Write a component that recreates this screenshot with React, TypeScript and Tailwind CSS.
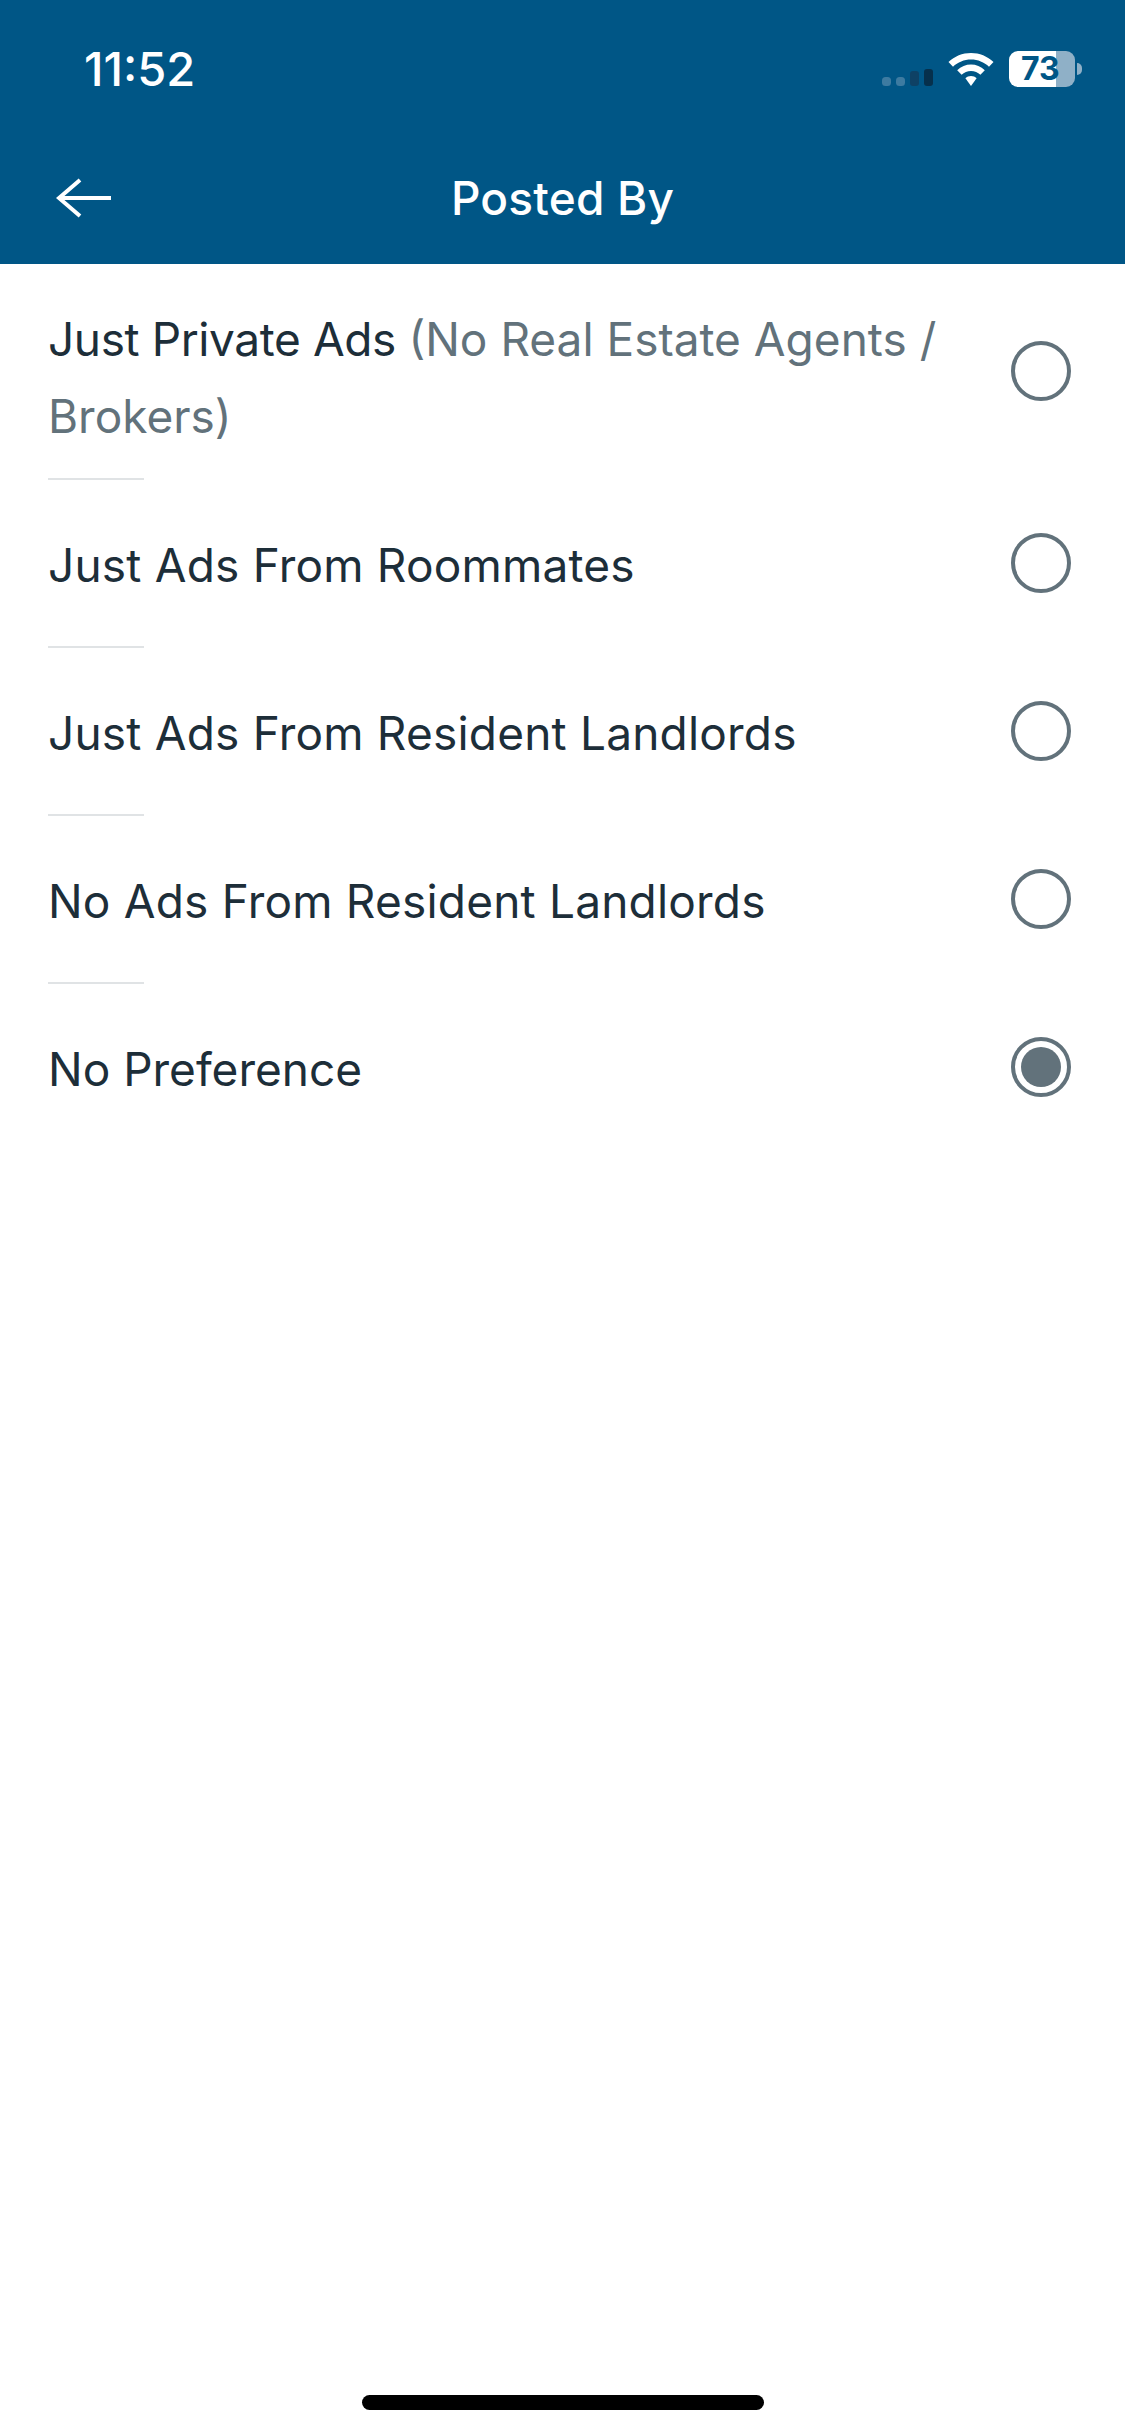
const options = [
  { label: "Just Ads From Roommates" },
  { label: "Just Ads From Resident Landlords" },
  { label: "No Ads From Resident Landlords" },
];

function Radio({ checked = false }: { checked?: boolean }) {
  return (
    <span className="flex h-[60px] w-[60px] shrink-0 items-center justify-center rounded-full border-[4px] border-[#62727b] bg-white">
      {checked && <span className="h-[40px] w-[40px] rounded-full bg-[#62727b]" />}
    </span>
  );
}

function Divider() {
  return <div className="h-[2px] w-[96px] bg-[#e0e3e5]" />;
}

function StatusBar() {
  return (
    <div className="flex h-[136px] items-start justify-between pl-[84px] pr-[43px] pt-[41px]">
      <span className="text-[47px] leading-[56px] font-medium text-white">11:52</span>
      <div className="flex items-center pt-[10px]">
        {/* signal */}
        <svg width="51" height="17" viewBox="0 0 51 17" className="mt-[16px] mr-[15px]">
          <rect x="0" y="8" width="9" height="9" rx="3.500" fill="#3d7ba1" />
          <rect x="14" y="8" width="9" height="9" rx="3.500" fill="#3d7ba1" />
          <rect x="28" y="2" width="9" height="15" rx="3" fill="#0e4165" />
          <rect x="42" y="0" width="9" height="17" rx="3" fill="#06304c" />
        </svg>
        {/* wifi */}
        <svg width="46" height="33" viewBox="0 0 46 33" className="mr-[15px]">
          <path d="M23 0C14.500 0 6.500 3.300 0.500 9L5 13.700C9.800 9.200 16.100 6.500 23 6.500C29.900 6.500 36.200 9.200 41 13.700L45.500 9C39.500 3.300 31.500 0 23 0Z" fill="#fff" />
          <path d="M23 11.500C18 11.500 13 13.500 9.200 17.200L13.600 21.800C16.100 19.400 19.400 18 23 18C26.600 18 29.900 19.400 32.400 21.800L36.800 17.200C33 13.500 28 11.500 23 11.500Z" fill="#fff" />
          <path d="M23 23C20.800 23 18.900 23.800 17.400 25.300L23 33L28.600 25.300C27.100 23.800 25.200 23 23 23Z" fill="#fff" />
        </svg>
        {/* battery */}
        <div className="relative flex h-[36px] w-[66px]">
          <div className="h-full w-[47px] rounded-l-[9px] bg-white" />
          <div className="h-full flex-1 rounded-r-[9px] bg-[#8fb0c7]" />
          <span className="absolute top-0 left-[12px] text-[32px] leading-[36px] font-bold text-[#005686]">73</span>
        </div>
        <div className="ml-[2px] h-[12px] w-[5px] rounded-r-full bg-[#8fb0c7]" />
      </div>
    </div>
  );
}

export default function App() {
  return (
    <div className="flex min-h-[2436px] flex-col bg-white font-['Inter',sans-serif]">
      <header className="h-[264px] bg-[#005686]">
        <StatusBar />
        <div className="flex h-[126px] items-center justify-center pb-[2px]">
          <svg width="56" height="40" viewBox="0 0 56 40" className="mr-[-112px] ml-[56px] shrink-0" fill="none" stroke="#fff" strokeWidth="4">
            <path d="M55 20H3" />
            <path d="M24 2L3 20L24 38" />
          </svg>
          <h1 className="flex-1 text-center text-[46px] leading-[56px] font-medium tracking-[0.2px] text-white">Posted By</h1>
        </div>
      </header>

      <main className="flex flex-col pl-[48px] pr-[54px] text-[46px] leading-[76px] tracking-[0.2px] text-[#1d2e39]">
        <div className="flex items-start justify-between pt-[37px] pb-[23px]">
          <p className="w-[910px] leading-[77px] tracking-[-0.4px]">
            Just Private Ads <span className="tracking-[0px] text-[#62727b]">(No Real Estate Agents / Brokers)</span>
          </p>
          <div className="pt-[40px]">
            <Radio />
          </div>
        </div>
        <Divider />
        {options.map((o) => (
          <div key={o.label}>
            <div className="flex h-[166px] items-center justify-between">
              <span className="pt-[3px]">{o.label}</span>
              <Radio />
            </div>
            <Divider />
          </div>
        ))}
        <div className="flex h-[166px] items-center justify-between">
          <span className="pt-[3px] tracking-[0px]">No Preference</span>
          <Radio checked />
        </div>
      </main>

      <div className="mt-auto flex justify-center pb-[26px]">
        <div className="h-[15px] w-[402px] rounded-full bg-black" />
      </div>
    </div>
  );
}
